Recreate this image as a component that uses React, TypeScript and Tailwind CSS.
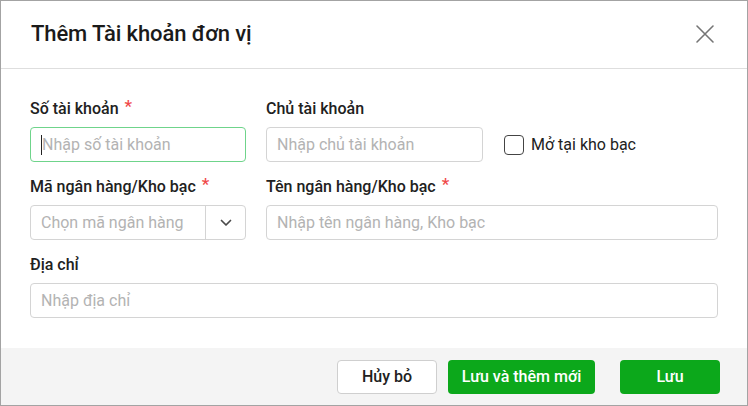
import React from "react";

const Star = () => <span className="ml-[6px] text-[#f04848] text-[17px] leading-none relative top-[-1px]">*</span>;

export default function App() {
  return (
    <div className="w-[748px] h-[406px] bg-white border border-[#a3a3a3] flex flex-col text-[#212121]" style={{ fontFamily: "Roboto, 'Noto Sans', sans-serif" }}>
      <div className="h-[68px] flex items-center justify-between pl-[30px] pr-[32px] border-b border-[#dedede] shrink-0">
        <div className="text-[22px] font-medium tracking-[-0.1px] text-[#1a1a1a] pb-[2px]">Thêm Tài khoản đơn vị</div>
        <svg width="20" height="20" viewBox="0 0 20 20" className="mt-[-2px]">
          <path d="M2 2 L18 18 M18 2 L2 18" stroke="#757575" strokeWidth="1.6" strokeLinecap="round" />
        </svg>
      </div>
      <div className="flex-1 px-[29px] pt-[30px]">
        <div className="flex gap-[20px]">
          <div className="w-[216px]">
            <div className="h-[20px] text-[16px] font-medium flex items-start leading-[20px] whitespace-nowrap">Số tài khoản<Star /></div>
            <div className="mt-[8px] h-[35px] rounded-[4px] border border-[#6fd48b] flex items-center px-[10px]">
              <span className="w-px h-[20px] bg-[#222]"></span>
              <span className="text-[16px] text-[#b3b3b3] whitespace-nowrap">Nhập số tài khoản</span>
            </div>
          </div>
          <div className="w-[217px]">
            <div className="h-[20px] text-[16px] font-medium leading-[20px]">Chủ tài khoản</div>
            <div className="mt-[8px] h-[35px] rounded-[4px] border border-[#d4d4d4] flex items-center px-[10px]">
              <span className="text-[16px] text-[#b3b3b3] whitespace-nowrap">Nhập chủ tài khoản</span>
            </div>
          </div>
          <div className="flex items-center pt-[28px] pl-[1px]">
            <div className="w-[20px] h-[20px] rounded-[4px] border border-[#444] mr-[7px]"></div>
            <span className="text-[16px] text-[#212121] whitespace-nowrap">Mở tại kho bạc</span>
          </div>
        </div>
        <div className="flex gap-[20px] mt-[15px]">
          <div className="w-[216px]">
            <div className="h-[20px] text-[16px] font-medium flex items-start leading-[20px] whitespace-nowrap">Mã ngân hàng/Kho bạc<Star /></div>
            <div className="mt-[8px] h-[35px] rounded-[4px] border border-[#d4d4d4] flex items-stretch">
              <div className="flex-1 flex items-center pl-[10px] overflow-hidden">
                <span className="text-[16px] text-[#b3b3b3] whitespace-nowrap">Chọn mã ngân hàng</span>
              </div>
              <div className="w-[40px] border-l border-[#d4d4d4] flex items-center justify-center shrink-0">
                <svg width="12" height="8" viewBox="0 0 12 8">
                  <path d="M1.5 1.5 L6 6 L10.5 1.5" fill="none" stroke="#4a4a4a" strokeWidth="1.7" strokeLinecap="round" strokeLinejoin="round" />
                </svg>
              </div>
            </div>
          </div>
          <div className="flex-1">
            <div className="h-[20px] text-[16px] font-medium flex items-start leading-[20px] whitespace-nowrap">Tên ngân hàng/Kho bạc<Star /></div>
            <div className="mt-[8px] h-[35px] rounded-[4px] border border-[#d4d4d4] flex items-center px-[10px]">
              <span className="text-[16px] text-[#b3b3b3]">Nhập tên ngân hàng, Kho bạc</span>
            </div>
          </div>
        </div>
        <div className="mt-[15px]">
          <div className="h-[20px] text-[16px] font-medium leading-[20px]">Địa chỉ</div>
          <div className="mt-[8px] h-[35px] rounded-[4px] border border-[#d4d4d4] flex items-center px-[10px]">
            <span className="text-[16px] text-[#b3b3b3]">Nhập địa chỉ</span>
          </div>
        </div>
      </div>
      <div className="h-[57px] bg-[#f4f4f4] flex items-center justify-end gap-[11px] pr-[27px] shrink-0">
        <button className="w-[100px] h-[34px] rounded-[4px] bg-white border border-[#cfcfcf] text-[16px] font-medium text-[#212121]">Hủy bỏ</button>
        <button className="w-[147px] h-[34px] rounded-[4px] bg-[#0ca81b] text-white text-[16px] font-medium">Lưu và thêm mới</button>
        <button className="w-[100px] h-[34px] rounded-[4px] bg-[#0ca81b] text-white text-[16px] font-medium ml-[14px]">Lưu</button>
      </div>
    </div>
  );
}
